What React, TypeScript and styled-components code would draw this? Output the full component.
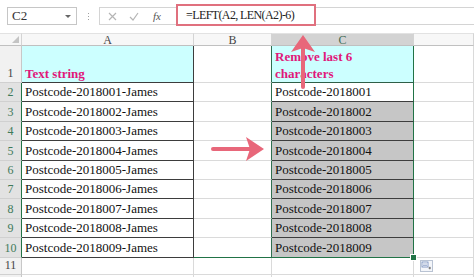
import React from "react";
import styled, { createGlobalStyle } from "styled-components";

const GlobalStyle = createGlobalStyle`
  html, body {
    margin: 0;
    padding: 0;
    background: #ffffff;
    overflow: hidden;
  }
  body {
    font-family: "Liberation Serif", "Times New Roman", serif;
  }
`;

const SELECT_GREEN = "#217346";
const TABLE_LINE = "#3d3d3d";
const GRID_LINE = "#dadada";
const PINK = "#e0187a";
const ARROW = "#e8677a";

const Page = styled.div`
  position: relative;
  width: 474px;
  height: 277px;
  overflow: hidden;
  background: #fff;
`;

/* ---------- formula bar ---------- */

const TopBar = styled.div`
  display: flex;
  align-items: flex-start;
  height: 33px;
  padding: 7px 0 0 7px;
  box-sizing: border-box;
`;

const NameBox = styled.div`
  display: flex;
  align-items: center;
  justify-content: space-between;
  width: 70px;
  height: 18px;
  box-sizing: border-box;
  border: 1px solid #c6c6c6;
  padding: 0 5px 0 4px;
  font-size: 13px;
  color: #333;
`;

const DropCaret = styled.span`
  width: 0;
  height: 0;
  border-left: 3px solid transparent;
  border-right: 3px solid transparent;
  border-top: 3px solid #666;
`;

const Grip = styled.div`
  display: flex;
  flex-direction: column;
  align-items: center;
  justify-content: center;
  gap: 2px;
  width: 22px;
  height: 18px;
  span {
    width: 1px;
    height: 1px;
    background: #a0a0a0;
  }
`;

const FxButtons = styled.div`
  display: flex;
  align-items: center;
  width: 77px;
  height: 18px;
  box-sizing: border-box;
  border: 1px solid #d4d4d4;
  border-right: none;
  padding-left: 8px;
  gap: 12px;
  color: #b0b0b0;
`;

const FxLabel = styled.span`
  font-style: italic;
  font-size: 11px;
  color: #555;
  margin-left: 2px;
`;

const FormulaField = styled.div`
  flex: 1;
  display: flex;
  height: 18px;
  box-sizing: border-box;
  border-top: 1px solid #d4d4d4;
  border-bottom: 1px solid #d4d4d4;
`;

const FormulaHighlight = styled.div`
  display: flex;
  align-items: center;
  width: 140px;
  height: 22px;
  margin-top: -4px;
  box-sizing: border-box;
  border: 2px solid #e0707e;
  background: #fff;
  padding-left: 8px;
  font-size: 12px;
  letter-spacing: -0.6px;
  color: #222;
  white-space: nowrap;
`;

/* ---------- sheet ---------- */

const Sheet = styled.div`
  display: grid;
  grid-template-columns: 22px 172px 78px 142px 1fr;
  grid-template-rows: 13px 37px repeat(9, 19.4px) 17px 1fr;
  height: 244px;
`;

const ColHead = styled.div<{ $selected?: boolean }>`
  display: flex;
  align-items: center;
  justify-content: center;
  box-sizing: border-box;
  border-top: 1px solid #e2e2e2;
  border-right: 1px solid #d4d4d4;
  border-bottom: 1px solid #c0c0c0;
  background: ${(p) => (p.$selected ? "#d3d3d3" : "#f7f7f7")};
  color: ${(p) => (p.$selected ? "#3f6b55" : "#444")};
  font-size: 12px;
  line-height: 1;
`;

const Corner = styled.div`
  position: relative;
  box-sizing: border-box;
  border-top: 1px solid #e2e2e2;
  border-right: 1px solid #d4d4d4;
  border-bottom: 1px solid #c0c0c0;
  background: #f7f7f7;
  &::after {
    content: "";
    position: absolute;
    right: 2px;
    bottom: 2px;
    width: 0;
    height: 0;
    border-left: 7px solid transparent;
    border-bottom: 7px solid #c4c4c4;
  }
`;

const RowHead = styled.div<{ $selected?: boolean }>`
  display: flex;
  align-items: flex-end;
  justify-content: center;
  box-sizing: border-box;
  padding-bottom: 2px;
  border-bottom: 1px solid #d0d0d0;
  border-right: 1px solid ${(p) => (p.$selected ? SELECT_GREEN : "#c8c8c8")};
  background: ${(p) => (p.$selected ? "#e2e2e2" : "#f1f1f1")};
  color: ${(p) => (p.$selected ? "#3f7a5a" : "#444")};
  font-size: 12px;
  line-height: 13px;
`;

const Cell = styled.div<{
  $bg?: string;
  $right?: string;
  $bottom?: string;
  $header?: boolean;
}>`
  position: relative;
  display: flex;
  align-items: flex-end;
  box-sizing: border-box;
  padding: 0 0 ${(p) => (p.$header ? "0" : "1px")} 3px;
  background: ${(p) => p.$bg ?? "#fff"};
  border-right: 1px solid ${(p) => p.$right ?? GRID_LINE};
  border-bottom: 1px solid ${(p) => p.$bottom ?? GRID_LINE};
  font-size: 13px;
  line-height: ${(p) => (p.$header ? "17px" : "16px")};
  color: ${(p) => (p.$header ? PINK : "#111")};
  font-weight: ${(p) => (p.$header ? 700 : 400)};
  white-space: nowrap;
`;

const FillHandle = styled.span`
  position: absolute;
  right: -4px;
  bottom: -4px;
  width: 5px;
  height: 5px;
  background: ${SELECT_GREEN};
  border: 1px solid #fff;
  z-index: 2;
`;

const PasteIcon = styled.div`
  margin: 2px 0 0 3px;
  align-self: flex-start;
`;

const Overlay = styled.svg`
  position: absolute;
  left: 0;
  top: 0;
  pointer-events: none;
`;

const CrossIcon = () => (
  <svg width="9" height="9" viewBox="0 0 9 9">
    <path d="M1 1 L8 8 M8 1 L1 8" stroke="#b5b5b5" strokeWidth="1.2" />
  </svg>
);

const CheckIcon = () => (
  <svg width="10" height="9" viewBox="0 0 10 9">
    <path d="M1 5 L4 8 L9 1" stroke="#b5b5b5" strokeWidth="1.2" fill="none" />
  </svg>
);

const PasteOptions = () => (
  <svg width="13" height="12" viewBox="0 0 13 12">
    <rect x="0.5" y="0.5" width="12" height="11" fill="#f4f6fa" stroke="#b9c3d3" />
    <rect x="2" y="2" width="6" height="5" fill="#fff" stroke="#6b86b8" strokeWidth="0.8" />
    <path d="M3 4 H7 M3 5.5 H7" stroke="#6b86b8" strokeWidth="0.6" />
    <path d="M8.5 8 H11 M9.75 6.8 V9.3" stroke="#5a5a5a" strokeWidth="0.8" />
  </svg>
);

const rows = [1, 2, 3, 4, 5, 6, 7, 8, 9];

export default function App() {
  return (
    <Page>
      <GlobalStyle />
      <TopBar>
        <NameBox>
          <span>C2</span>
          <DropCaret />
        </NameBox>
        <Grip>
          <span />
          <span />
          <span />
        </Grip>
        <FxButtons>
          <CrossIcon />
          <CheckIcon />
          <FxLabel>fx</FxLabel>
        </FxButtons>
        <FormulaField>
          <FormulaHighlight>=LEFT(A2, LEN(A2)-6)</FormulaHighlight>
        </FormulaField>
      </TopBar>

      <Sheet>
        <Corner />
        <ColHead>A</ColHead>
        <ColHead>B</ColHead>
        <ColHead $selected>C</ColHead>
        <ColHead />

        <RowHead>1</RowHead>
        <Cell $bg="#ccffff" $right={TABLE_LINE} $bottom={TABLE_LINE} $header>
          Text string
        </Cell>
        <Cell $right="#2f6f50" />
        <Cell $bg="#ccffff" $right={SELECT_GREEN} $bottom="#2f5f48" $header>
          Remove last 6
          <br />
          characters
        </Cell>
        <Cell />

        {rows.map((n) => {
          const last = n === 9;
          return (
            <React.Fragment key={n}>
              <RowHead $selected>{n + 1}</RowHead>
              <Cell $right={TABLE_LINE} $bottom={TABLE_LINE}>
                Postcode-201800{n}-James
              </Cell>
              <Cell $right="#2f6f50" $bottom={last ? SELECT_GREEN : GRID_LINE} />
              <Cell
                $bg={n === 1 ? "#fff" : "#c6c6c6"}
                $right={SELECT_GREEN}
                $bottom={last ? SELECT_GREEN : TABLE_LINE}
              >
                Postcode-201800{n}
                {last && <FillHandle />}
              </Cell>
              <Cell />
            </React.Fragment>
          );
        })}

        <RowHead>11</RowHead>
        <Cell />
        <Cell />
        <Cell />
        <Cell>
          <PasteIcon>
            <PasteOptions />
          </PasteIcon>
        </Cell>

        <RowHead />
        <Cell />
        <Cell />
        <Cell />
        <Cell />
      </Sheet>

      <Overlay width="474" height="277" viewBox="0 0 474 277">
        <line x1="303" y1="48" x2="303" y2="87" stroke={ARROW} strokeWidth="4" strokeLinecap="round" />
        <path d="M303 35 L315 52 L303 48 L291 52 Z" fill={ARROW} />
        <line x1="213" y1="149" x2="252" y2="149" stroke={ARROW} strokeWidth="4" strokeLinecap="round" />
        <path d="M264 149 L246 137 L250 149 L246 161 Z" fill={ARROW} />
      </Overlay>
    </Page>
  );
}
